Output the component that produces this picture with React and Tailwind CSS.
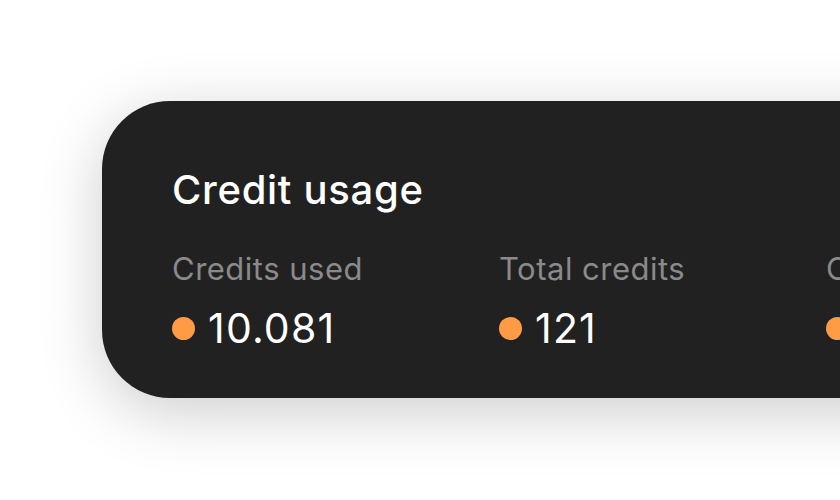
export default function App() {
  const stats = [
    { label: 'Credits used', value: '10.081' },
    { label: 'Total credits', value: '121' },
    { label: 'Credits left', value: '0' },
  ];

  return (
    <div className="h-[500px] w-[840px] overflow-hidden bg-white pl-[102px] pt-[101px]" style={{ fontFamily: 'Inter, "Noto Sans", sans-serif' }}>
      <div className="h-[297px] w-[1000px] rounded-[68px] bg-[#212121] pl-[70px] pt-[65px] shadow-[0_14px_64px_rgba(0,0,0,0.2)]">
        <h2 className="text-[40px] font-medium leading-[48px] tracking-[0.7px] text-white">Credit usage</h2>
        <div className="mt-[37px] flex">
          {stats.map((s) => (
            <div key={s.label} className="w-[327px] shrink-0">
              <div className="text-[31px] leading-[36px] tracking-[0.5px] text-[#8a8a8a]">{s.label}</div>
              <div className="mt-[19px] flex items-center gap-[13px]">
                <span className="h-[23px] w-[23px] shrink-0 rounded-full bg-[#ff9a45]" />
                <span className="text-[41px] leading-[44px] tracking-[1.2px] text-white">{s.value}</span>
              </div>
            </div>
          ))}
        </div>
      </div>
    </div>
  );
}
